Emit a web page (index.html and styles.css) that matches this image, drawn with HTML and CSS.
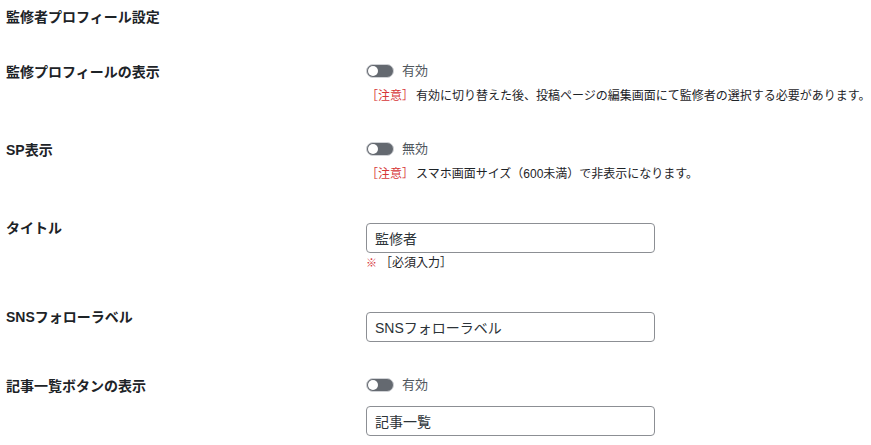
FILE: index.html
```html
<!DOCTYPE html>
<html lang="ja">
<head>
<meta charset="utf-8">
<link rel="stylesheet" href="styles.css">
</head>
<body>
<div class="page">
  <h2 class="title">監修者プロフィール設定</h2>
  <div class="form">
    <div class="row">
      <div class="th">監修プロフィールの表示</div>
      <div class="td">
        <label class="toggle"><span class="switch"><span class="knob"></span></span><span class="state">有効</span></label>
        <p class="note"><span class="caution">［注意］</span>有効に切り替えた後、投稿ページの編集画面にて監修者の選択する必要があります。</p>
      </div>
    </div>
    <div class="row">
      <div class="th">SP表示</div>
      <div class="td">
        <label class="toggle"><span class="switch"><span class="knob"></span></span><span class="state">無効</span></label>
        <p class="note"><span class="caution">［注意］</span>スマホ画面サイズ（600未満）で非表示になります。</p>
      </div>
    </div>
    <div class="row">
      <div class="th">タイトル</div>
      <div class="td">
        <input class="text" type="text" value="監修者">
        <p class="req"><span class="mark">※</span>［必須入力］</p>
      </div>
    </div>
    <div class="row">
      <div class="th">SNSフォローラベル</div>
      <div class="td">
        <input class="text" type="text" value="SNSフォローラベル">
      </div>
    </div>
    <div class="row">
      <div class="th">記事一覧ボタンの表示</div>
      <div class="td">
        <label class="toggle"><span class="switch"><span class="knob"></span></span><span class="state">有効</span></label>
        <input class="text after-toggle" type="text" value="記事一覧">
      </div>
    </div>
  </div>
</div>
</body>
</html>
```
FILE: styles.css
```css
* { box-sizing: border-box; }
html, body { margin: 0; padding: 0; background: #fff; }
body {
  font-family: "Liberation Sans", "Noto Sans CJK JP", sans-serif;
  color: #1d2327;
  font-size: 14px;
}
.page { padding: 7px 0 0 6px; }
.title {
  margin: 0;
  font-size: 14px;
  line-height: 20px;
  font-weight: 700;
}
.form { padding-top: 15px; }
.row {
  display: grid;
  grid-template-columns: 360px 1fr;
}
.th {
  padding: 20px 0 0 0;
  font-size: 14px;
  line-height: 20px;
  font-weight: 700;
}
.td { padding: 19px 0 14px 0; }
.toggle {
  display: flex;
  align-items: center;
  height: 20px;
  gap: 8px;
}
.switch {
  position: relative;
  width: 28px;
  height: 14px;
  border-radius: 7px;
  background: #646970;
  border: 1px solid #d0d2d6;
}
.knob {
  position: absolute;
  left: 1px;
  top: 1px;
  width: 10px;
  height: 10px;
  border-radius: 50%;
  background: #fff;
}
.state { font-size: 13px; color: #50575e; line-height: 20px; }
.note {
  margin: 5px 0 0 0;
  font-size: 12px;
  line-height: 20px;
  color: #1d2327;
}
.caution { color: #d63638; margin-right: 2px; }
.text {
  display: block;
  margin-top: 6px;
  width: 289px;
  height: 30px;
  padding: 0 8px;
  border: 1px solid #8c8f94;
  border-radius: 4px;
  font-family: "Liberation Sans", "Noto Sans CJK JP", sans-serif;
  font-size: 14px;
  color: #2c3338;
  background: #fff;
}
.text.after-toggle { margin-top: 11px; }
.req {
  margin: 0;
  font-size: 12px;
  line-height: 20px;
  color: #1d2327;
}
.mark { color: #d63638; font-size: 11px; font-weight: 700; margin-right: 3px; }
```
